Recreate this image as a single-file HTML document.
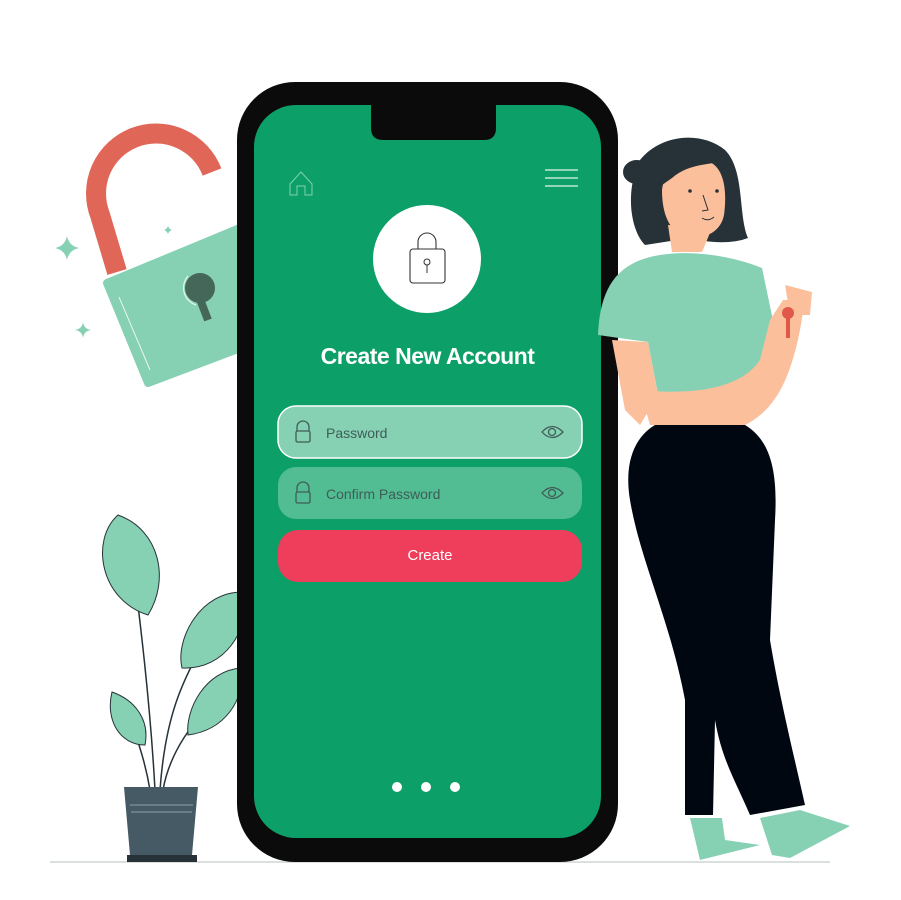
<!DOCTYPE html>
<html><head><meta charset="utf-8"><style>
html,body{margin:0;padding:0;background:#fff;}
body{width:901px;height:900px;position:relative;overflow:hidden;font-family:"Liberation Sans",sans-serif;}
svg{position:absolute;left:0;top:0;}
.t{position:absolute;left:254px;width:347px;text-align:center;color:#fff;}
</style></head><body>
<svg width="901" height="900" viewBox="0 0 901 900">
  <line x1="50" y1="862" x2="830" y2="862" stroke="#cfd6d4" stroke-width="1.5"/>
  <path d="M117 272 L100 215 A58 58 0 0 1 212 172" fill="none" stroke="#e06657" stroke-width="20"/>
  <polygon points="107,283 240,228 262,340 148,383" fill="#86d0b4" stroke="#86d0b4" stroke-width="8" stroke-linejoin="round"/>
  <line x1="119" y1="297" x2="150" y2="370" stroke="#e8f6f0" stroke-width="1"/>
  <circle cx="200" cy="288" r="15" fill="#44675a"/>
  <path d="M198 294 L208 320" stroke="#44675a" stroke-width="8"/>
  <path d="M188 276 A18 18 0 0 0 196 305" fill="none" stroke="#e8f6f0" stroke-width="1.2"/>
  <path d="M67 236 q2 10 12 12 q-10 2 -12 12 q-2 -10 -12 -12 q10 -2 12 -12z" fill="#86d0b4"/>
  <path d="M83 322 q1 7 8 8 q-7 1 -8 8 q-1 -7 -8 -8 q7 -1 8 -8z" fill="#86d0b4"/>
  <path d="M168 226 q1 3 4 4 q-3 1 -4 4 q-1 -3 -4 -4 q3 -1 4 -4z" fill="#86d0b4"/>
  <path d="M155 790 C150 700 140 620 130 540" stroke="#263238" stroke-width="1.5" fill="none"/>
  <path d="M160 790 C165 720 180 680 215 625" stroke="#263238" stroke-width="1.5" fill="none"/>
  <path d="M163 790 C170 750 195 720 215 700" stroke="#263238" stroke-width="1.5" fill="none"/>
  <path d="M150 790 C145 760 135 730 125 710" stroke="#263238" stroke-width="1.5" fill="none"/>
  <path d="M118 515 C90 540 100 600 148 615 C170 580 160 530 118 515z" fill="#86d0b4" stroke="#263238" stroke-width="1"/>
  <path d="M245 592 C200 590 175 640 182 668 C225 670 250 630 245 592z" fill="#86d0b4" stroke="#263238" stroke-width="1"/>
  <path d="M242 668 C205 670 185 710 188 735 C225 730 245 700 242 668z" fill="#86d0b4" stroke="#263238" stroke-width="1"/>
  <path d="M112 692 C105 720 120 745 145 745 C150 720 135 700 112 692z" fill="#86d0b4" stroke="#263238" stroke-width="1"/>
  <polygon points="124,787 198,787 192,855 130,855" fill="#455a64"/>
  <rect x="127" y="855" width="70" height="7" fill="#263238"/>
  <line x1="130" y1="805" x2="193" y2="805" stroke="#8ba0a8" stroke-width="1"/>
  <line x1="131" y1="812" x2="192" y2="812" stroke="#8ba0a8" stroke-width="1"/>
  <rect x="237" y="82" width="381" height="780" rx="58" fill="#0b0b0b"/>
  <rect x="254" y="105" width="347" height="733" rx="42" fill="#0d9f68"/>
  <path d="M371 100 H496 V128 Q496 140 484 140 H383 Q371 140 371 128Z" fill="#0b0b0b"/>
  <path d="M290 195 V184 L301 172 L312 184 V195 H305 V186 H297 V195Z" fill="none" stroke="#7fd2ae" stroke-width="1"/>
  <g stroke="#e4f5ed" stroke-width="1.2"><line x1="545" y1="170" x2="578" y2="170"/><line x1="545" y1="178" x2="578" y2="178"/><line x1="545" y1="186" x2="578" y2="186"/></g>
  <circle cx="427" cy="259" r="54" fill="#fff"/>
  <path d="M418 249 V242 A9 9 0 0 1 436 242 V249" fill="none" stroke="#333" stroke-width="1.1"/>
  <rect x="410" y="249" width="35" height="34" rx="3" fill="none" stroke="#333" stroke-width="1.1"/>
  <circle cx="427" cy="262" r="3" fill="none" stroke="#333" stroke-width="1"/><line x1="427" y1="265" x2="427" y2="273" stroke="#333"/>
  <rect x="278" y="406" width="304" height="52" rx="18" fill="#86d0b4" stroke="#fff" stroke-width="1.5"/>
  <rect x="278" y="467" width="304" height="52" rx="18" fill="#52bc92"/>
  <rect x="278" y="530" width="304" height="52" rx="20" fill="#ef3d5c"/>
  <g fill="none" stroke="#3f5d59" stroke-width="1.3">
    <path d="M297 431 V427 A6 6 0 0 1 309 427 V431"/><rect x="296" y="431" width="14" height="11" rx="1.5"/>
    <path d="M297 492 V488 A6 6 0 0 1 309 488 V492"/><rect x="296" y="492" width="14" height="11" rx="1.5"/>
    <path d="M542 432 Q552 421 563 432 Q552 443 542 432Z"/><circle cx="552" cy="432" r="3.5"/>
    <path d="M542 493 Q552 482 563 493 Q552 504 542 493Z"/><circle cx="552" cy="493" r="3.5"/>
  </g>
  <g fill="#fff"><circle cx="397" cy="787" r="5"/><circle cx="426" cy="787" r="5"/><circle cx="455" cy="787" r="5"/></g>
  <!-- woman -->
  <path d="M645 245 C630 230 625 190 640 160 C660 135 700 130 725 150 C745 170 738 215 748 238 C730 245 705 242 690 238 Z" fill="#263238"/>
  <ellipse cx="637" cy="172" rx="14" ry="12" fill="#263238"/>
  <path d="M668 225 L672 252 L702 252 L712 228Z" fill="#fcbf9c"/>
  <path d="M662 190 C664 170 680 160 700 160 C722 160 728 185 724 215 C720 235 700 240 685 236 C670 232 662 215 662 190Z" fill="#fcbf9c"/>
  <path d="M655 190 C650 150 690 140 728 160 C715 165 690 162 672 178 Z" fill="#263238"/>
  <circle cx="690" cy="191" r="1.8" fill="#263238"/><circle cx="717" cy="191" r="1.8" fill="#263238"/>
  <path d="M703 195 L708 210 L702 211" fill="none" stroke="#263238" stroke-width="1"/>
  <path d="M702 218 Q708 222 714 217" fill="none" stroke="#263238" stroke-width="1"/>
  <path d="M598 335 C600 290 615 262 660 255 C690 250 730 255 762 268 L775 330 L765 400 L660 405 L648 342 Z" fill="#86d0b4"/>
  <path d="M612 340 L648 342 L658 395 L640 425 L625 410 Z" fill="#fcbf9c"/>
  <path d="M640 390 C690 395 740 390 760 360 L770 320 L783 300 L805 300 L800 330 C790 380 775 410 745 425 L650 425 Z" fill="#fcbf9c"/>
  <path d="M785 285 L812 292 L810 315 L790 315Z" fill="#fcbf9c"/>
  <circle cx="788" cy="313" r="6" fill="#e0584a"/><rect x="786" y="316" width="4" height="22" fill="#e0584a"/>
  <path d="M655 425 L745 425 C770 440 778 470 775 520 L770 640 C780 700 795 760 805 805 L750 815 C735 780 722 760 715 720 L713 815 L685 815 L685 700 C670 620 640 560 630 500 C625 470 630 440 655 425Z" fill="#000710"/>
  <path d="M690 818 L722 818 L725 840 L760 845 L700 860 Z" fill="#86d0b4"/>
  <path d="M760 818 L800 810 L850 826 L790 858 L772 855 Z" fill="#86d0b4"/>
</svg>
<div class="t" style="top:343px;font-size:23px;font-weight:bold;letter-spacing:-0.5px;">Create New Account</div>
<div style="position:absolute;left:326px;top:425px;font-size:14px;color:#3f5d59;">Password</div>
<div style="position:absolute;left:326px;top:486px;font-size:14px;color:#3f5d59;">Confirm Password</div>
<div style="position:absolute;left:278px;width:304px;top:547px;text-align:center;font-size:15px;color:#fff;">Create</div>
</body></html>
